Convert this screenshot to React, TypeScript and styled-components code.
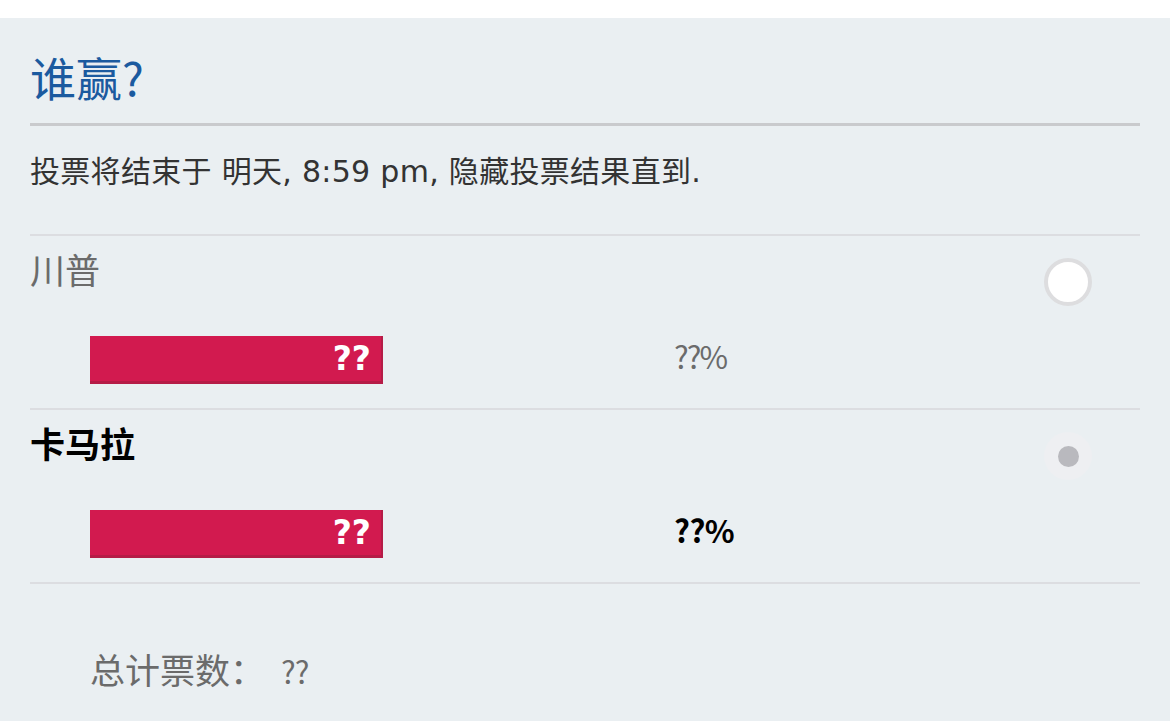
import styled, { createGlobalStyle } from 'styled-components';

const GlobalStyle = createGlobalStyle`
  html, body {
    margin: 0;
    padding: 0;
    background: #ffffff;
  }
  body {
    font-family: "Noto Sans CJK SC", "DejaVu Sans", sans-serif;
  }
`;

const options = [
  { name: '川普', voted: false, pct: '??%', count: '??' },
  { name: '卡马拉', voted: true, pct: '??%', count: '??' },
];

export default () => {
  return (
    <>
      <GlobalStyle />
      <Page>
        <Panel>
          <Title>谁赢?</Title>
          <Info>投票将结束于 明天, 8:59 pm, 隐藏投票结果直到.</Info>
          <List>
            {options.map((o) => (
              <Option key={o.name}>
                <OptionHead>
                  <Name $voted={o.voted}>{o.name}</Name>
                  <Radio $voted={o.voted}>{o.voted && <Dot />}</Radio>
                </OptionHead>
                <ResultRow>
                  <Bar>{o.count}</Bar>
                  <Percent $voted={o.voted}>{o.pct}</Percent>
                </ResultRow>
              </Option>
            ))}
          </List>
          <Total>
            总计票数：<TotalCount>??</TotalCount>
          </Total>
        </Panel>
      </Page>
    </>
  );
};

const Page = styled.div`
  padding-top: 18px;
  background: #ffffff;
`;

const Panel = styled.div`
  background: #eaeff2;
  padding: 0 30px 40px;
  min-height: 703px;
  box-sizing: border-box;
`;

const Title = styled.h2`
  margin: 0;
  padding-top: 28px;
  padding-bottom: 17px;
  font-size: 46px;
  line-height: 60px;
  font-weight: normal;
  color: #1b5a9f;
  border-bottom: 3px solid #c9cacd;
`;

const Info = styled.div`
  padding: 26px 0 42px;
  font-family: "DejaVu Sans", "Noto Sans CJK SC", sans-serif;
  font-size: 30px;
  line-height: 40px;
  letter-spacing: 0.3px;
  color: #333333;
`;

const List = styled.div`
  border-top: 2px solid #dcdde1;
`;

const Option = styled.div`
  border-bottom: 2px solid #dcdde1;
  padding: 10px 0 24px;
`;

const OptionHead = styled.div`
  display: flex;
  align-items: flex-start;
  justify-content: space-between;
  height: 60px;
`;

const Name = styled.div<{ $voted: boolean }>`
  font-size: 35px;
  line-height: 46px;
  color: ${(p) => (p.$voted ? '#000000' : '#6b6b6b')};
  font-weight: ${(p) => (p.$voted ? 'bold' : 'normal')};
`;

const Radio = styled.div<{ $voted: boolean }>`
  width: 48px;
  height: 48px;
  margin: 12px 48px 0 0;
  border-radius: 50%;
  box-sizing: border-box;
  display: flex;
  align-items: center;
  justify-content: center;
  background: ${(p) => (p.$voted ? '#eeeff2' : '#ffffff')};
  border: ${(p) => (p.$voted ? 'none' : '4px solid #dddddf')};
`;

const Dot = styled.div`
  width: 21px;
  height: 21px;
  border-radius: 50%;
  background: #b9b9be;
`;

const ResultRow = styled.div`
  display: flex;
  align-items: center;
  height: 48px;
  margin-top: 30px;
  padding-left: 60px;
`;

const Bar = styled.div`
  width: 293px;
  height: 48px;
  box-sizing: border-box;
  background: #d21a4f;
  border-right: 2px solid #b51c47;
  border-bottom: 3px solid #b51c47;
  color: #ffffff;
  font-family: "DejaVu Sans", sans-serif;
  font-weight: bold;
  font-size: 33px;
  line-height: 45px;
  text-align: right;
  padding-right: 10px;
`;

const Percent = styled.div<{ $voted: boolean }>`
  margin: 0 0 8px 291px;
  font-size: 31px;
  line-height: 46px;
  letter-spacing: ${(p) => (p.$voted ? '-0.5px' : '-2px')};
  color: ${(p) => (p.$voted ? '#000000' : '#6b6b6b')};
  font-weight: ${(p) => (p.$voted ? 'bold' : 'normal')};
`;

const Total = styled.div`
  padding: 62px 0 0 60px;
  font-size: 35px;
  line-height: 46px;
  color: #6b6b6b;
`;

const TotalCount = styled.span`
  margin-left: 16px;
  font-size: 31px;
  letter-spacing: -1px;
`;
